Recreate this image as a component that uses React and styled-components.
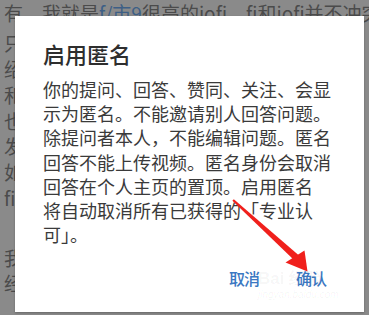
import React from 'react';
import styled, { createGlobalStyle } from 'styled-components';

const GlobalStyle = createGlobalStyle`
    html, body {
        margin: 0;
        padding: 0;
        background: #8a8a8a;
        overflow: hidden;
    }
    body {
        font-family: "Noto Sans CJK SC", "Noto Sans", sans-serif;
    }
`;

const Screen = styled.div`
    position: relative;
    width: 369px;
    height: 315px;
    overflow: hidden;
    background: #8a8a8a;
`;

const Backdrop = styled.div`
    display: flex;
    flex-direction: column;
    padding: 0 0 0 4px;
    color: #4b4b4b;
    font-size: 19px;
    white-space: nowrap;
`;

const BgPara = styled.div`
    display: flex;
    flex-direction: column;
    margin-top: ${props => props.mt || 0}px;
`;

const BgLine = styled.div`
    height: ${props => props.lh}px;
    line-height: ${props => props.lh}px;
`;

const BlueWord = styled.span`
    color: #3d5f86;
`;

const Dialog = styled.div`
    position: absolute;
    left: 15px;
    top: 16px;
    width: 349px;
    height: 296px;
    box-sizing: border-box;
    background: #ffffff;
    box-shadow: 0 1px 2px rgba(0, 0, 0, 0.25);
    padding: 22px 28px 16px 28px;
    display: flex;
    flex-direction: column;
`;

const Title = styled.h2`
    margin: 0;
    height: 30px;
    font-size: 22px;
    line-height: 30px;
    font-weight: 500;
    color: #2e2e2e;
`;

const Body = styled.div`
    margin-top: 9px;
    display: flex;
    flex-direction: column;
    font-size: 18px;
    color: #3a3a3a;
    white-space: nowrap;
`;

const Line = styled.div`
    flex: none;
    height: 24.2px;
    line-height: 24.2px;
`;

const Actions = styled.div`
    margin-top: auto;
    display: flex;
    justify-content: flex-end;
    gap: 17px;
`;

const ActionButton = styled.button`
    border: none;
    background: none;
    padding: 0 10px;
    height: 36px;
    font-family: "Noto Sans CJK SC", "Noto Sans", sans-serif;
    font-size: 16px;
    font-weight: 500;
    color: #3b78c2;
    letter-spacing: -1px;
`;

const Watermark = styled.div`
    position: absolute;
    left: 258px;
    top: 270px;
    display: flex;
    flex-direction: column;
    line-height: 1;
    color: rgba(0, 0, 0, 0.045);
    font-family: "Liberation Sans", sans-serif;
    pointer-events: none;
`;

const MarkBig = styled.span`
    font-size: 17px;
    font-weight: 700;
`;

const MarkSmall = styled.span`
    font-size: 10px;
    margin-top: 3px;
    font-style: italic;
`;

const Arrow = styled.svg`
    position: absolute;
    left: 0;
    top: 0;
    pointer-events: none;
`;

const bodyLines = [
    '你的提问、回答、赞同、关注、会显',
    '示为匿名。不能邀请别人回答问题。',
    '除提问者本人，不能编辑问题。匿名',
    '回答不能上传视频。匿名身份会取消',
    '回答在个人主页的置顶。启用匿名',
    '将自动取消所有已获得的「专业认',
    '可」。',
];

const App = () => {
    return (
        <Screen>
            <GlobalStyle />
            <Backdrop>
                <BgPara>
                    <BgLine lh={26}>有，我就是<BlueWord>f/市9</BlueWord>很高的jofi，fi和jofi并不冲突</BgLine>
                </BgPara>
                <BgPara mt={4}>
                    <BgLine lh={26}>只要你喜欢就好</BgLine>
                    <BgLine lh={26}>绍一下</BgLine>
                    <BgLine lh={26}>和</BgLine>
                    <BgLine lh={25}>也</BgLine>
                    <BgLine lh={26}>发</BgLine>
                    <BgLine lh={26}>如</BgLine>
                    <BgLine lh={26}>fi</BgLine>
                </BgPara>
                <BgPara mt={34}>
                    <BgLine lh={25}>我</BgLine>
                    <BgLine lh={25}>经</BgLine>
                </BgPara>
            </Backdrop>

            <Dialog>
                <Title>启用匿名</Title>
                <Body>
                    {bodyLines.map((l, i) => <Line key={i}>{l}</Line>)}
                </Body>
                <Actions>
                    <ActionButton>取消</ActionButton>
                    <ActionButton>确认</ActionButton>
                </Actions>
            </Dialog>

            <Watermark>
                <MarkBig>Bai 经验</MarkBig>
                <MarkSmall>jingyan.baidu.com</MarkSmall>
            </Watermark>

            <Arrow width="369" height="315" viewBox="0 0 369 315">
                <polygon points="232.4,200.8 233.8,199.2 299,255.5 294.5,260.5" fill="#f0201c" />
                <polygon points="285.5,262.5 304.5,250.5 307.5,271.5" fill="#f0201c" />
            </Arrow>
        </Screen>
    );
};

export default App;
